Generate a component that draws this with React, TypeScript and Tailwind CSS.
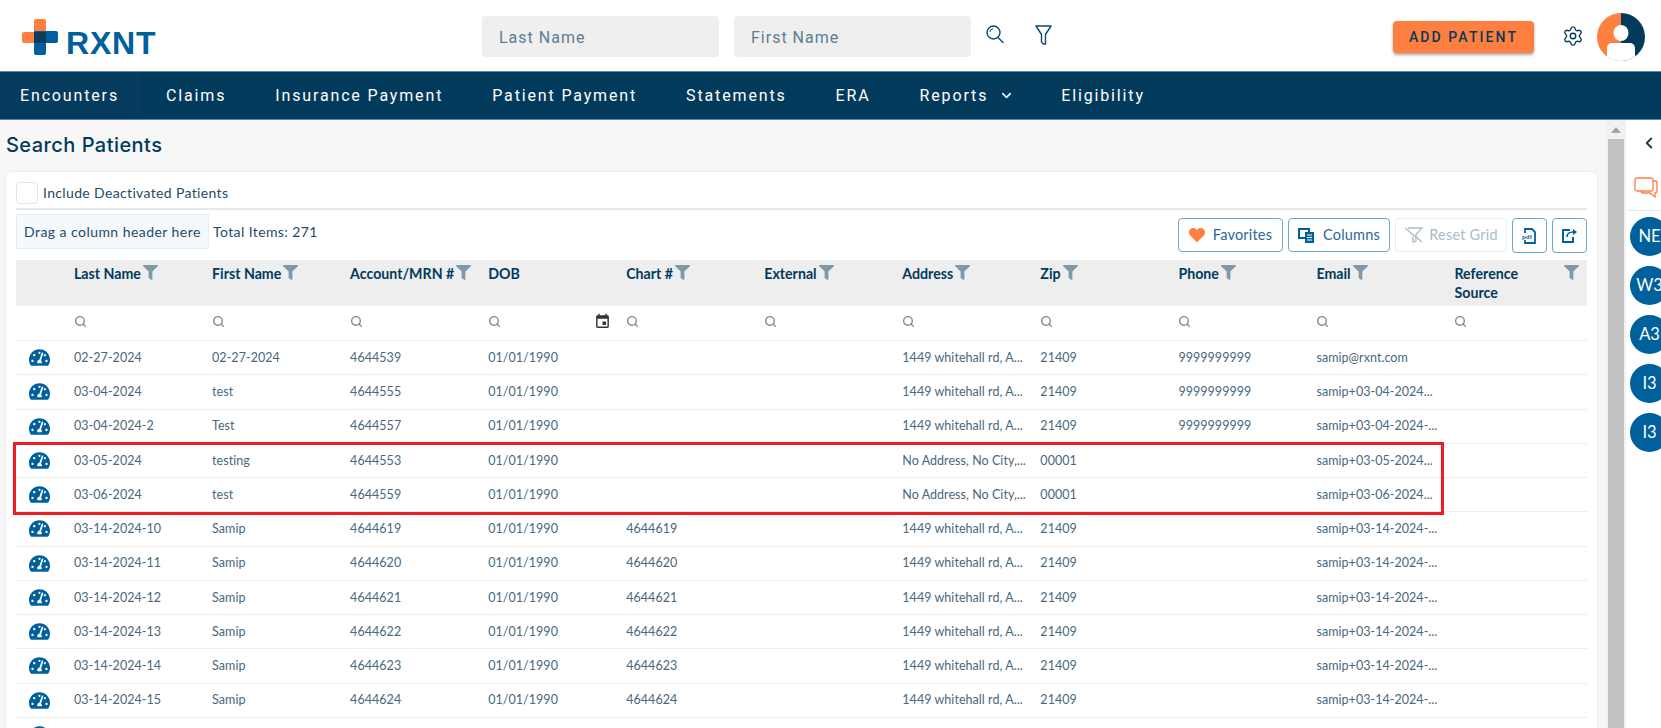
import { ChevronDown, ChevronLeft, Search, Settings } from "lucide-react";
import { FaFilter, FaHeart, FaTachometerAlt } from "react-icons/fa";
import { MdEvent } from "react-icons/md";

const navItems = ["Encounters", "Claims", "Insurance Payment", "Patient Payment", "Statements", "ERA", "Reports", "Eligibility"];

const columns = [
  { label: "Last Name", filter: true },
  { label: "First Name", filter: true },
  { label: "Account/MRN #", filter: true },
  { label: "DOB", filter: false },
  { label: "Chart #", filter: true },
  { label: "External", filter: true },
  { label: "Address", filter: true },
  { label: "Zip", filter: true },
  { label: "Phone", filter: true },
  { label: "Email", filter: true },
];

const addr = "1449 whitehall rd, A...";
const noAddr = "No Address, No City,...";
const phone = "9999999999";
const dob = "01/01/1990";
const rows = [
  ["02-27-2024", "02-27-2024", "4644539", dob, "", "", addr, "21409", phone, "samip@rxnt.com"],
  ["03-04-2024", "test", "4644555", dob, "", "", addr, "21409", phone, "samip+03-04-2024..."],
  ["03-04-2024-2", "Test", "4644557", dob, "", "", addr, "21409", phone, "samip+03-04-2024-..."],
  ["03-05-2024", "testing", "4644553", dob, "", "", noAddr, "00001", "", "samip+03-05-2024..."],
  ["03-06-2024", "test", "4644559", dob, "", "", noAddr, "00001", "", "samip+03-06-2024..."],
  ["03-14-2024-10", "Samip", "4644619", dob, "4644619", "", addr, "21409", "", "samip+03-14-2024-..."],
  ["03-14-2024-11", "Samip", "4644620", dob, "4644620", "", addr, "21409", "", "samip+03-14-2024-..."],
  ["03-14-2024-12", "Samip", "4644621", dob, "4644621", "", addr, "21409", "", "samip+03-14-2024-..."],
  ["03-14-2024-13", "Samip", "4644622", dob, "4644622", "", addr, "21409", "", "samip+03-14-2024-..."],
  ["03-14-2024-14", "Samip", "4644623", dob, "4644623", "", addr, "21409", "", "samip+03-14-2024-..."],
  ["03-14-2024-15", "Samip", "4644624", dob, "4644624", "", addr, "21409", "", "samip+03-14-2024-..."],
];

const gridCols = "grid grid-cols-[51px_repeat(11,138.05px)]";

function Logo() {
  return (
    <div className="flex h-[71px] items-start">
      <svg width="36" height="36" viewBox="0 0 36 36" className="mt-[19px] shrink-0">
        <path d="M12 2a2 2 0 0 1 2-2h8a2 2 0 0 1 2 2v22H2a2 2 0 0 1-2-2v-7a2 2 0 0 1 2-2h10z" fill="#ff7f41" />
        <path d="M12 12h22a2 2 0 0 1 2 2v8a2 2 0 0 1-2 2H24v10a2 2 0 0 1-2 2h-8a2 2 0 0 1-2-2z" fill="#00609c" />
        <path d="M12 13h12v11H12z" fill="#0d3b5e" />
      </svg>
      <span className="ml-[8px] mt-[25px] text-[32px] leading-[36px] font-bold tracking-[0.8px] text-[#00609c] font-['Liberation_Sans',sans-serif]">RXNT</span>
    </div>
  );
}

function Avatar() {
  return (
    <svg width="48" height="48" viewBox="0 0 48 48" className="mt-[3px] rounded-full shrink-0">
      <rect width="24" height="48" fill="#ff7f41" />
      <rect x="24" width="24" height="48" fill="#023a5c" />
      <ellipse cx="24" cy="20" rx="7.5" ry="8" fill="#fff" />
      <path d="M10 48V35a5 5 0 0 1 5-5h18a5 5 0 0 1 5 5v13z" fill="#fff" />
    </svg>
  );
}

function TopSearchIcon() {
  return (
    <svg width="18" height="19" viewBox="0 0 18 19" fill="none" stroke="#0c4a70" strokeWidth="1.4">
      <circle cx="7.5" cy="7.5" r="6.5" />
      <path d="M3.8 7a3.8 3.8 0 0 1 3.4-3.2" strokeWidth="1" />
      <path d="M12 12.5l5 5" strokeLinecap="round" />
    </svg>
  );
}

function TopFilterIcon() {
  return (
    <svg width="17" height="20" viewBox="0 0 17 20" fill="none" stroke="#0c4a70" strokeWidth="1.4">
      <path d="M1 1h15l-5.5 8.5V19H8.5L6.5 17V9.5z" strokeLinejoin="round" />
    </svg>
  );
}

function ColumnsIcon() {
  return (
    <svg width="17" height="15" viewBox="0 0 17 15" fill="none">
      <path d="M1 1h10v9H1z" stroke="#00609c" strokeWidth="2" />
      <path d="M7 4h9v11H7z" fill="#00609c" />
      <path d="M9 7h5M9 9.5h5M9 12h5" stroke="#fff" strokeWidth="1" />
    </svg>
  );
}

function ResetIcon() {
  return (
    <svg width="19" height="16" viewBox="0 0 19 16" fill="none" stroke="#a9bcc8" strokeWidth="1.3">
      <path d="M4 1h14l-6 6.5V14l-3 1V9.5" />
      <path d="M1 1l17 14" />
    </svg>
  );
}

function PdfIcon() {
  return (
    <svg width="15" height="16" viewBox="0 0 15 16" fill="none">
      <path d="M3 5V1h7l3 3v11H3v-3" stroke="#00609c" strokeWidth="1.8" />
      <text x="0" y="10.8" fontSize="6" fontWeight="700" fill="#00609c" fontFamily="Liberation Sans, sans-serif">pdf</text>
    </svg>
  );
}

function ExportIcon() {
  return (
    <svg width="16" height="15" viewBox="0 0 16 15" fill="none" stroke="#00609c" strokeWidth="2">
      <path d="M8 2H1v12h10V9" />
      <path d="M5 9c0-3 2-5 6-5" strokeWidth="1.6" />
      <path d="M11 1l4 3-4 3z" fill="#00609c" stroke="none" />
    </svg>
  );
}

function ChatIcon() {
  return (
    <svg width="24" height="22" viewBox="0 0 24 22" fill="none" stroke="#ff7f41" strokeWidth="1.3">
      <path d="M3 1h14a2 2 0 0 1 2 2v9a2 2 0 0 1-2 2H6l-3 0a2 2 0 0 1-2-2V3a2 2 0 0 1 2-2z" />
      <path d="M19 4h2a2 2 0 0 1 2 2v8a2 2 0 0 1-2 2v4l-5-4H9a2 2 0 0 1-2-2" />
    </svg>
  );
}

export default function App() {
  return (
    <div className="relative h-[728px] w-full overflow-hidden bg-white text-[#023a5c] font-['Lato',sans-serif]">
      {/* top bar */}
      <header className="flex h-[71px] items-center pl-[22px] pr-[16px]">
        <div className="w-[460px] shrink-0">
          <Logo />
        </div>
        <div className="flex gap-[15px] mt-[1px]">
          <input placeholder="Last Name" className="h-[41px] w-[237px] rounded bg-[#efefef] px-[17px] pt-[2px] text-[16px] tracking-[1px] font-['Roboto',sans-serif] placeholder:text-[#5f7d92]" />
          <input placeholder="First Name" className="h-[41px] w-[237px] rounded bg-[#efefef] px-[17px] pt-[2px] text-[16px] tracking-[1px] font-['Roboto',sans-serif] placeholder:text-[#5f7d92]" />
        </div>
        <span className="ml-[15px] -mt-[3px]"><TopSearchIcon /></span>
        <span className="ml-[31px] -mt-[1px]"><TopFilterIcon /></span>
        <button className="ml-auto mt-[3px] h-[32px] w-[141px] rounded bg-[#ff7f41] text-[14px] font-medium tracking-[2.1px] text-[#023a5c] shadow-[0_2px_3px_rgba(0,0,0,0.35)] font-['Roboto',sans-serif]">
          ADD PATIENT
        </button>
        <Settings size={22} strokeWidth={1.5} className="ml-[28px] mr-[13px] shrink-0 text-[#023a5c]" />
        <Avatar />
      </header>

      {/* nav */}
      <nav className="flex h-[49px] items-stretch border-y border-[#5d86a0] bg-[#023a5c] text-white font-['Roboto',sans-serif] text-[16px] tracking-[1.85px]">
        {navItems.map((item, i) => (
          <a key={item} className={i === 0 ? "flex items-center gap-2 bg-[#053c5e] pl-[20px] pr-[22.5px]" : "flex items-center gap-[11px] px-[24.5px]"}>
            {item}
            {item === "Reports" && <ChevronDown size={15} strokeWidth={2.5} className="-mr-[2px]" />}
          </a>
        ))}
      </nav>

      <div className="flex h-[608px]">
        {/* main */}
        <main className="w-[1606px] shrink-0 bg-[#f7f7f7] pl-[6px] pr-[9px]">
          <h1 className="pt-[11px] h-[52px] text-[20px] leading-[28px] font-medium tracking-[0.45px] font-['Inter',sans-serif]">Search Patients</h1>
          <section className="h-[600px] rounded-t-md bg-white px-[10px] pt-[10px] shadow-[0_0_3px_rgba(0,0,0,0.08)]">
            <div className="flex h-[28px] items-start border-b-2 border-[#e8e8e8]">
              <span className="h-[22px] w-[22px] rounded border border-[#e4e4e4] bg-white" />
              <span className="ml-[5px] text-[14px] leading-[22px] tracking-[0.35px] text-[#1f4a68]">Include Deactivated Patients</span>
            </div>

            <div className="mt-[4px] flex h-[46px] items-start">
              <div className="flex h-[35px] w-[193px] items-center border border-[#e6edf2] bg-[#f5f9fc] pl-[7px] text-[14px] tracking-[0.45px] text-[#1f4a68]">Drag a column header here</div>
              <span className="ml-[4px] mt-[8px] text-[14px] leading-[20px] tracking-[0.4px] text-[#1f4a68]">Total Items: 271</span>
              <div className="ml-auto mt-[4px] flex gap-[5px] text-[14.5px] tracking-[0.2px] text-[#27699a]">
                <button className="flex h-[34px] w-[105px] items-center justify-center gap-2 rounded border border-[#6ea6c8]">
                  <FaHeart size={16} className="text-[#ff7f41]" /> Favorites
                </button>
                <button className="flex h-[34px] w-[102px] items-center justify-center gap-2 rounded border border-[#6ea6c8]">
                  <ColumnsIcon /> Columns
                </button>
                <button className="flex h-[34px] w-[112px] items-center justify-center gap-[6px] rounded border border-[#e8eef2] text-[#a9bcc8]">
                  <ResetIcon /> Reset Grid
                </button>
                <button className="flex h-[35px] w-[35px] items-center justify-center rounded border border-[#6ea6c8]">
                  <PdfIcon />
                </button>
                <button className="flex h-[35px] w-[35px] items-center justify-center rounded border border-[#6ea6c8]">
                  <ExportIcon />
                </button>
              </div>
            </div>

            {/* grid header */}
            <div className={`${gridCols} h-[46px] bg-[#eeeeee] text-[14.2px] leading-[19px] font-bold`}>
              <div />
              {columns.map((c) => (
                <div key={c.label} className="flex items-start gap-[2px] pl-[7px] pt-[4px]">
                  <span>{c.label}</span>
                  {c.filter && <FaFilter size={15} className="mt-[1px] text-[#7f99a9]" />}
                </div>
              ))}
              <div className="flex items-start justify-between pl-[7px] pr-[7px] pt-[4px]">
                <span>
                  Reference
                  <br />
                  Source
                </span>
                <FaFilter size={15} className="mt-[1px] text-[#7f99a9]" />
              </div>
            </div>

            {/* filter row */}
            <div className={`${gridCols} h-[35px] border-b border-[#eeeeee]`}>
              <div />
              {Array.from({ length: 11 }).map((_, i) => (
                <div key={i} className="relative flex items-center pl-[7px] pb-[3px]">
                  <Search size={13} strokeWidth={2.5} className="text-[#8a857f]" />
                  {i === 3 && <MdEvent size={17} className="absolute right-[8px] top-[7px] text-[#333333]" />}
                </div>
              ))}
            </div>

            {/* rows */}
            {rows.map((r) => (
              <div key={r[0]} className={`${gridCols} h-[34.25px] items-center border-b border-[#eeeeee] text-[12.5px] tracking-[0.05px] text-[#48687e]`}>
                <div className="flex justify-center pl-[2px] pr-[7px]">
                  <FaTachometerAlt size={21} className="text-[#00609c]" />
                </div>
                {r.map((v, i) => (
                  <div key={i} className="overflow-hidden whitespace-nowrap pl-[7px] pt-[1px]">{v}</div>
                ))}
                <div />
              </div>
            ))}
            {/* next row, only its icon top shows above the fold */}
            <div className={`${gridCols} h-[34.25px] items-center`}>
              <div className="flex justify-center pl-[2px] pr-[7px]">
                <FaTachometerAlt size={21} className="text-[#00609c]" />
              </div>
            </div>
          </section>
        </main>

        {/* scrollbar */}
        <div className="flex w-[20px] shrink-0 flex-col items-center bg-[#f1f1f1]">
          <div className="mt-[7px] h-0 w-0 border-x-[5px] border-b-[6px] border-x-transparent border-b-[#a3a3a3]" />
          <div className="mt-[6px] w-[16px] flex-1 bg-[#c1c1c1]" />
        </div>

        {/* right panel */}
        <aside className="flex w-[35px] shrink-0 flex-col overflow-hidden bg-white">
          <ChevronLeft size={18} strokeWidth={2.5} className="ml-[14px] mt-[14px] shrink-0 text-[#123f42]" />
          <div className="ml-[8px] mt-[25px] shrink-0"><ChatIcon /></div>
          <div className="ml-[2px] mt-[11px] h-px shrink-0 bg-[#e8e8e8]" />
          <div className="mt-[6px] flex flex-col gap-[10px] pl-[4px]">
            {["NE", "W3", "A3", "I3", "I3"].map((t, i) => (
              <div key={i} className="flex h-[39px] w-[39px] shrink-0 items-center justify-center rounded-full bg-[#00609c] text-[16.5px] text-white">{t}</div>
            ))}
          </div>
        </aside>
      </div>

      {/* annotation */}
      <div className="pointer-events-none absolute left-[13px] top-[442px] h-[73px] w-[1431px] border-[3px] border-[#ed1c24]" />
    </div>
  );
}
